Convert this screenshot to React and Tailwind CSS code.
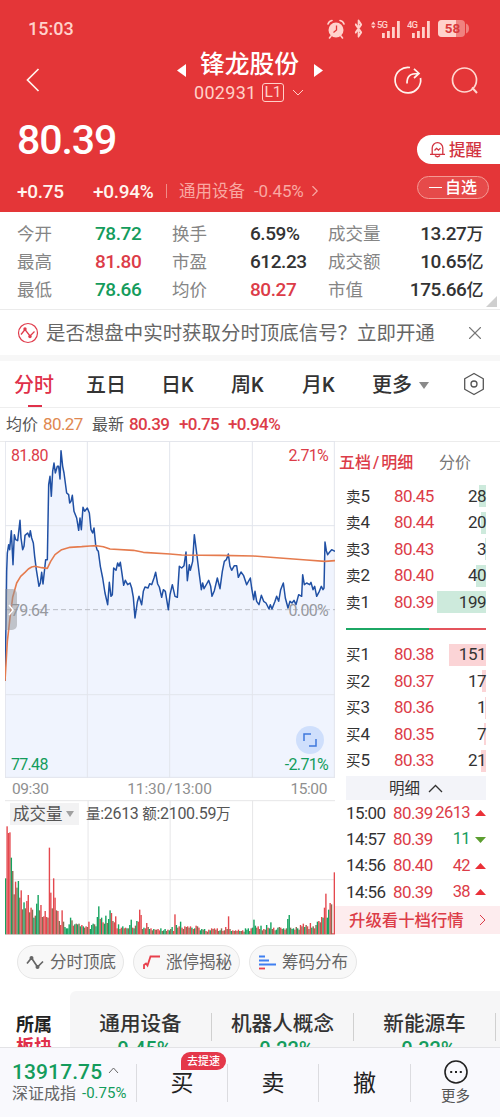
import React from 'react';
import { ChevronRight, X, Bluetooth } from 'lucide-react';

// 分时价格走势
const pricePoints =
  '15,729 18,555 20,400 22,345 26,320 29,335 34,278 39,380 43,290 47,305 53,308 60,247 63,300 68,335 72,325 75,292 83,285 88,297 91,278 95,300 100,315 104,355 109,395 117,445 121,435 125,403 129,438 137,365 142,365 146,140 150,115 154,175 158,100 162,75 166,105 172,85 176,85 180,123 183,38 188,85 192,105 200,165 206,170 209,195 213,190 217,172 222,220 230,240 236,277 240,240 244,275 249,208 254,220 262,210 268,225 273,275 278,285 282,270 287,320 291,335 295,340 301,385 308,420 315,465 323,500 328,433 333,475 337,470 341,390 348,397 353,375 357,385 361,373 365,400 371,442 376,427 383,440 390,435 395,450 400,478 405,540 412,492 417,475 425,500 430,460 435,447 444,450 449,437 455,440 462,420 467,403 473,438 478,447 485,478 490,455 496,460 505,515 510,470 517,440 525,475 532,478 538,385 545,390 552,383 558,342 562,428 568,380 571,397 578,370 583,290 590,345 598,410 604,455 608,435 612,452 620,438 626,427 632,445 636,475 643,458 652,420 660,452 667,400 673,370 679,365 685,348 690,385 695,397 703,383 710,383 715,418 723,402 731,413 740,440 751,420 755,450 761,485 765,460 770,490 777,500 784,472 791,490 798,495 807,513 811,500 816,513 825,490 830,475 836,490 842,455 850,435 856,480 864,510 870,490 876,495 882,487 888,500 896,470 905,475 908,410 913,440 920,435 929,440 933,433 939,455 944,445 950,475 958,460 964,445 969,455 972,450 975,312 979,338 983,350 989,342 995,335 1005,340';

// 均价线
const avgPoints =
  '15,729 22,610 30,540 38,478 50,435 62,415 75,403 85,393 95,387 105,385 125,389 142,391 152,370 165,350 185,335 210,328 245,326 270,324 290,323 310,326 330,333 400,337 430,343 510,348 545,351 660,352 760,354 840,360 920,366 975,370 1005,368';

// 成交量：高度 + 颜色（r 红 / g 绿 / m 混合）
const volumes =
  '168g 324r 304r 306r 230g 190m 120m 158r 140m 160g 110m 132r 75m 96g 78m 100r 118r 66m 80r 74m 50g 56m 92g 118g 72m 88r 52m 54r 70r 52r 50m 260r 125r 78m 168r 110r 72m 70r 40m 28r 72r 38m 22g 18g 18g 30g 50g 42m 26r 30g 32m 30g 32m 24g 28r 24g 20m 24r 22m 38r 16g 28g 32g 30m 24g 52g 84g 46r 50g 36r 32g 56g 34m 46g 72g 64r 40m 36r 54r 18r 30g 16m 20r 24g 18m 20r 18g 18m 28g 44g 20r 18g 26m 40g 38r 74r 58r 16m 20g 18r 34r 22m 16g 18r 12m 16g 14r 14m 16r 12r 18g 10m 12g 16g 10m 14r 12g 16m 22g 10r 60r 28g 20m 24r 38g 20r 16m 24r 22m 24r 20m 24r 20g 16r 18g 26r 24m 20r 12g 16g 14m 16g 10r 8m 14r 12g 18r 16m 18r 14m 18r 10m 12g 18m 10r 12m 22r 16m 54r 16m 10g 12r 10m 12r 10m 14r 10g 10m 12r 8m 18g 14g 18g 10m 18r 20g 44g 26g 20m 24r 16m 26g 12m 16r 14m 28g 20r 18g 36g 16m 20r 12m 14g 20g 22m 20r 16m 18g 14r 18m 46g 58g 20m 16g 18g 14r 22m 18g 14m 28r 24m 32r 22g 28m 24r 16m 34r 20g 24m 18r 28m 38g 40r 36m 52r 50g 80r 122r 50g 74g 94r 90m 4r 186r';
const volumeColor = { r: '#e4484e', g: '#14a35f', m: '#8c6a50' };
const bars = volumes.split(' ').map(v => ({ h: parseInt(v, 10), c: volumeColor[v.slice(-1)] }));

const stats = [
  ['今开', '78.72', 'text-[#149c5c]', '换手', '6.59%', 'text-[#333]', '成交量', '13.27万'],
  ['最高', '81.80', 'text-[#dc3c48]', '市盈', '612.23', 'text-[#333]', '成交额', '10.65亿'],
  ['最低', '78.66', 'text-[#149c5c]', '均价', '80.27', 'text-[#dc3c48]', '市值', '175.66亿'],
];

const asks = [
  ['卖5', '80.45', '28', 7],
  ['卖4', '80.44', '20', 5],
  ['卖3', '80.43', '3', 1],
  ['卖2', '80.40', '40', 10],
  ['卖1', '80.39', '199', 49],
];

const bids = [
  ['买1', '80.38', '151', 37],
  ['买2', '80.37', '17', 4],
  ['买3', '80.36', '1', 1],
  ['买4', '80.35', '7', 2],
  ['买5', '80.33', '21', 5],
];

const trades = [
  ['15:00', '80.39', '2613', true],
  ['14:57', '80.39', '11', false],
  ['14:56', '80.40', '42', true],
  ['14:56', '80.39', '38', true],
];

const StatusBar = () => (
  <div className="flex h-[54px] items-center pl-7 pr-[31px] pt-[3px] text-[#ffd2cc]">
    <span className="flex-1 text-[18px] font-medium">15:03</span>
    <svg width="18" height="20" viewBox="0 0 18 20" className="mr-[7px]">
      <circle cx="9" cy="11" r="7.500" fill="currentColor" />
      <path d="M1 5 Q2 2 5 1.500 M17 5 Q16 2 13 1.500 M4 17 L2.500 19 M14 17 L15.500 19" stroke="currentColor" strokeWidth="1.600" fill="none" strokeLinecap="round" />
      <path d="M9.500 6.500 V11 L6.500 13.500" stroke="#e43638" strokeWidth="1.300" fill="none" />
    </svg>
    <Bluetooth className="mr-[6px] h-[19px] w-[13px]" strokeWidth={3} preserveAspectRatio="none" />
    <svg width="29" height="20" viewBox="0 0 29 20" className="mr-[7px]" fill="currentColor">
      <path d="M0 5.500 L2.300 2.500 L4.600 5.500 Z M0 6.800 L2.300 9.500 L4.600 6.800 Z" />
      <text x="6" y="9" fontSize="9.500" fontWeight="500" textLength="11">5G</text>
      <path d="M11 14h2.800v5H11z M16 12h2.800v7H16z M21 8h2.800v11H21z M26 2h2.800v17H26z" />
    </svg>
    <svg width="23" height="20" viewBox="0 0 23 20" className="mr-[8px]" fill="currentColor">
      <text x="0" y="9" fontSize="9.500" fontWeight="500" textLength="11">4G</text>
      <path d="M5 14h2.800v5H5z M10 12h2.800v7H10z M15 8h2.800v11H15z M20 2h2.800v17H20z" />
    </svg>
    <svg width="31" height="17" viewBox="0 0 31 17">
      <rect x="0" y="0" width="27" height="17" rx="4" fill="#f0827f" />
      <path d="M4 0h14v17H4a4 4 0 0 1-4-4V4a4 4 0 0 1 4-4z" fill="#ffd2cc" />
      <path d="M28 3.500q3 1 3 5t-3 5z" fill="#f0827f" />
      <text x="14.500" y="13.300" fontSize="13.500" fontWeight="700" textAnchor="middle" fill="#d93a3c">58</text>
    </svg>
  </div>
);

const Header = () => (
  <header className="h-[212px] bg-[#e43638] text-[#fff4ee]">
    <StatusBar />
    <div className="flex h-[54px] items-center">
      <svg width="14" height="24" viewBox="0 0 14 24" className="-mt-[2px] ml-[26px]">
        <path d="M12.500 1 L1.500 12 L12.500 23" stroke="currentColor" strokeWidth="1.700" fill="none" />
      </svg>
      <div className="-mt-[5px] ml-[137px] flex w-[146px] flex-col">
        <div className="flex h-[28px] items-center justify-between">
          <svg width="9" height="13" viewBox="0 0 9 13" className="mt-[10px]"><path d="M9 0v13L0 6.500z" fill="#fff" /></svg>
          <span className="pr-px text-[24.800px] font-medium leading-none text-white">锋龙股份</span>
          <svg width="9" height="13" viewBox="0 0 9 13" className="mt-[10px]"><path d="M0 0v13L9 6.500z" fill="#fff" /></svg>
        </div>
        <div className="flex h-[26px] items-center pl-[17px] text-[#ffd0c8]">
          <span className="w-[68px] text-[18px] leading-none tracking-[0.300px]">002931</span>
          <span className="flex h-[19px] w-[22px] items-center justify-center rounded-[3px] border border-[#ffd0c8] pt-px text-[15.500px] leading-none">L1</span>
          <svg width="12" height="7" viewBox="0 0 12 7" className="ml-[8px]"><path d="M1 1l5 5 5-5" stroke="currentColor" fill="none" /></svg>
        </div>
      </div>
      <svg width="30" height="30" viewBox="0 0 30 30" className="-mt-[2px] ml-[70px]" fill="none" stroke="currentColor" strokeWidth="1.700">
        <path d="M17 2.500 A12.800 12.800 0 1 0 27.500 13" />
        <path d="M14 18.500 C14 11 17 8.500 25.500 8.500 M21 3.800 L26 8.500 L21 13" />
      </svg>
      <svg width="28" height="30" viewBox="0 0 28 30" className="-mt-[2px] ml-[28px]" fill="none" stroke="#ffd8d0" strokeWidth="1.700">
        <circle cx="13.500" cy="15" r="12" />
        <path d="M21 22.500 L26 28" strokeWidth="2" />
      </svg>
    </div>
    <div className="flex h-[104px] justify-between">
      <div className="flex flex-col pl-[17px]">
        <span className="mt-[10px] flex h-[44px] items-center text-[41px] font-medium leading-none tracking-[-1.100px] text-white">80.39</span>
        <div className="mt-[17px] flex h-[24px] items-center text-[19px] leading-none">
          <span className="w-[76px] font-medium tracking-[-0.300px]">+0.75</span>
          <span className="w-[73px] font-medium tracking-[-0.300px]">+0.94%</span>
          <span className="h-[14px] w-px bg-[#f08c88]" />
          <span className="ml-[12px] w-[75px] pt-[2px] text-[16.500px] text-[#f9a8a2]">通用设备</span>
          <span className="w-[56px] text-[17px] tracking-[-0.100px] text-[#f9a8a2]">-0.45%</span>
          <ChevronRight className="-ml-1 h-[18px] w-[18px] text-[#f9a8a2]" strokeWidth={1.5} />
        </div>
      </div>
      <div className="flex w-[83px] flex-col pt-[27px]">
        <div className="flex h-[29px] items-center rounded-l-full bg-white pl-[13px] text-[16.500px] font-medium leading-none text-[#d23440]">
          <svg width="15" height="17" viewBox="0 0 15 17" className="mr-[4px]" fill="none" stroke="currentColor" strokeWidth="1.300">
            <path d="M2.200 13V7a5.300 5.300 0 0 1 10.600 0v6 M0 13.300h15 M5 14.500q2.500 2.500 5 0 M4.500 9.500l2-2.200 2 1.800 2-2" />
          </svg>
          <span className="pt-[3px]">提醒</span>
        </div>
        <div className="mt-[12px] flex h-[23px] w-[72px] items-center justify-center rounded-full border border-[#f49a94] bg-[#e64a4a] text-[16px] font-medium leading-none text-white">
          <span className="mr-[3px] h-[1.500px] w-[13px] bg-white" />
          <span className="pt-px">自选</span>
        </div>
      </div>
    </div>
  </header>
);

const Stats = () => (
  <section className="relative flex h-[98px] flex-col border-b border-[#ebebeb] pt-[7px] text-[#333]">
    {stats.map(row => (
      <div key={row[0]} className="flex h-7 items-center pl-[17px] pr-[17px] text-[19px] font-medium leading-none tracking-[-0.450px]">
        <span className="w-[78px] pt-[3px] text-[17.500px] font-normal tracking-normal text-[#858585]">{row[0]}</span>
        <span className={`w-[77px] ${row[2]}`}>{row[1]}</span>
        <span className="w-[78px] pt-[3px] text-[17.500px] font-normal tracking-normal text-[#858585]">{row[3]}</span>
        <span className={`w-[78px] ${row[5]}`}>{row[4]}</span>
        <span className="pt-[3px] text-[17.500px] font-normal tracking-normal text-[#858585]">{row[6]}</span>
        <span className="flex-1 text-right">{row[7].slice(0, -1)}<span className="text-[17px]">{row[7].slice(-1)}</span></span>
      </div>
    ))}
    <svg width="11" height="11" viewBox="0 0 11 11" className="absolute bottom-[2px] right-[3px]"><path d="M11 0v11H0z" fill="#cfcfcf" /></svg>
  </section>
);

const Banner = () => (
  <section className="flex h-[51px] items-center border-b-[6px] border-[#f7f7f7] pl-[17px] text-[#666]">
    <svg width="22" height="22" viewBox="0 0 22 22" fill="none" stroke="#e03c4c">
      <circle cx="11" cy="11" r="9.500" strokeWidth="1.200" />
      <path d="M4 12.500 L8 7.500 L13 14 L17.500 9.500" strokeWidth="1.300" />
      <circle cx="8" cy="7" r="1.700" fill="#e03c4c" stroke="none" />
      <circle cx="13" cy="14.500" r="1.700" fill="#e03c4c" stroke="none" />
    </svg>
    <span className="ml-[7px] flex-1 whitespace-nowrap pt-[3px] text-[19.450px] leading-none">是否想盘中实时获取分时顶底信号？立即开通</span>
    <X className="mr-[14px] h-[22px] w-[22px] text-[#777]" strokeWidth={1.2} />
  </section>
);

const Tabs = () => (
  <nav className="flex h-[47px] items-center border-b border-[#eee] pl-[14px] text-[20px] font-medium leading-none text-[#333]">
    <div className="relative flex h-full w-[72px] items-center pt-[2px] text-[#e0304a]">
      分时
      <span className="absolute bottom-0 left-[14px] h-[2px] w-[14px] bg-[#e0304a]" />
    </div>
    <span className="w-[75px] pt-[2px]">五日</span>
    <span className="w-[70px] pt-[2px]">日K</span>
    <span className="w-[71px] pt-[2px]">周K</span>
    <span className="w-[70px] pt-[2px]">月K</span>
    <span className="pt-[2px]">更多</span>
    <svg width="10" height="7" viewBox="0 0 10 7" className="ml-[7px] mt-[2px]"><path d="M0 0h10L5 7z" fill="#8a8a8a" /></svg>
    <svg width="22" height="24" viewBox="0 0 22 24" className="ml-[34px]" fill="none" stroke="#555" strokeWidth="1.300">
      <path d="M11 1.500 L20.300 6.700 V17.300 L11 22.500 L1.700 17.300 V6.700 Z" strokeLinejoin="round" />
      <circle cx="11" cy="12" r="3" />
    </svg>
  </nav>
);

const Quote = () => (
  <div className="flex h-[33px] items-center pl-[6px] text-[17px] leading-none tracking-[-0.600px] text-[#dc3c48]">
    <span className="w-[37px] pt-px text-[16px] tracking-normal text-[#555]">均价</span>
    <span className="w-[49px] text-[#e08850]">80.27</span>
    <span className="w-[37px] pt-px text-[16px] tracking-normal text-[#555]">最新</span>
    <span className="w-[50px] font-medium">80.39</span>
    <span className="w-[49px] font-medium">+0.75</span>
    <span className="font-medium">+0.94%</span>
  </div>
);

const PriceChart = () => (
  <div className="relative h-[337px] w-[330px] text-[16px] leading-none tracking-[-0.700px]">
    <svg width="330" height="337" viewBox="15 9 990 1011" fill="none">
      <polygon points={`15,1020 ${pricePoints} 1005,1020`} fill="#f0f4fe" />
      <path d="M262 9V1020 M509 9V1020 M757 9V1020 M15 263H1005 M15 770H1005" stroke="#e2e5ec" strokeWidth="3" />
      <path d="M16 9V1020 M1003 9V1020 M15 10H1005 M15 1018H1005" stroke="#e2e5ec" strokeWidth="3" />
      <path d="M15 515H1005" stroke="#b9bcc4" strokeWidth="3" strokeDasharray="15 9" />
      <polyline points={pricePoints} stroke="#2050a4" strokeWidth="4.500" strokeLinejoin="round" />
      <polyline points={avgPoints} stroke="#e57b4e" strokeWidth="4.800" strokeLinejoin="round" />
    </svg>
    <span className="absolute left-[6px] top-[7px] text-[#dc3c48]">81.80</span>
    <span className="absolute right-[7px] top-[7px] text-[#dc3c48]">2.71%</span>
    <span className="absolute left-[6px] top-[162px] text-[#97999e]">79.64</span>
    <span className="absolute right-[7px] top-[162px] text-[#97999e]">0.00%</span>
    <span className="absolute bottom-[5px] left-[6px] text-[#149c5c]">77.48</span>
    <span className="absolute bottom-[5px] right-[7px] text-[#149c5c]">-2.71%</span>
    <div className="absolute left-0 top-[148px] flex h-[41px] w-[12px] items-center justify-center rounded-r-[5px] bg-[#8f9196]/50">
      <svg width="6" height="12" viewBox="0 0 6 12"><path d="M1 1l4 5-4 5" stroke="#fff" strokeWidth="1.500" fill="none" /></svg>
    </div>
    <div className="absolute bottom-[24px] right-[11px] flex h-[28px] w-[28px] items-center justify-center rounded-full bg-[#cfdffc]">
      <svg width="14" height="14" viewBox="0 0 14 14" fill="none" stroke="#3f78dc" strokeWidth="1.500"><path d="M1 8V1h7 M13 6v7H6" /></svg>
    </div>
  </div>
);

const VolumeChart = () => (
  <div className="relative h-[135px] w-[330px]">
    <svg width="330" height="135" viewBox="12 239 993 405" preserveAspectRatio="none">
      <path d="M12 241H1005 M262 241V643 M509 241V643 M757 241V643 M12 478H1005 M12 642H1005" stroke="#e6e6e8" strokeWidth="3" />
      {bars.map((b, i) => (
        <rect key={i} x={12 + (i * 989) / (bars.length - 1)} y={642 - b.h} width="4.200" height={b.h} fill={b.c} />
      ))}
    </svg>
    <div className="absolute left-[5px] top-[3px] flex h-[22px] items-center text-[16px] leading-none text-[#555]">
      <div className="flex h-full w-[69px] items-center bg-[#f2f2f3] pl-[3px] text-[16.500px]">
        <span className="pt-[2px]">成交量</span>
        <svg width="8" height="6" viewBox="0 0 8 6" className="ml-[3px]"><path d="M0 0h8L4 6z" fill="#a0a0a0" /></svg>
      </div>
      <span className="ml-[7px] whitespace-nowrap pt-px tracking-[-0.300px]"><span className="text-[14.500px]">量</span>:2613 <span className="text-[14.500px]">额</span>:2100.59<span className="text-[14.500px]">万</span></span>
    </div>
  </div>
);

const Level = ({ row, bar }) => (
  <div className="flex h-[26.500px] items-center text-[17px] leading-none">
    <span className="w-[48px] text-[#333]"><span className="text-[14.500px]">{row[0][0]}</span>{row[0][1]}</span>
    <span className="w-[43px] tracking-[-0.600px] text-[#dc3c48]">{row[1]}</span>
    <div className="relative flex h-[22px] flex-1 items-center justify-end text-[#333]">
      <span className={`absolute right-0 top-0 h-full ${bar}`} style={{ width: row[3] }} />
      <span className="relative tracking-[-0.500px]">{row[2]}</span>
    </div>
  </div>
);

const OrderBook = () => (
  <div className="flex w-[165px] flex-col">
    <div className="flex h-[41px] items-center pl-[4px] leading-none">
      <span className="w-[100px] text-[16px] font-medium text-[#dc3c48]">五档<span className="mx-[2px]">/</span>明细</span>
      <span className="text-[16px] text-[#777]">分价</span>
    </div>
    <div className="flex flex-col pl-[11px] pr-[14px]">
      {asks.map(row => <Level key={row[0]} row={row} bar="bg-[#cdeadc]" />)}
      <div className="my-[12px] flex h-[2px]">
        <span className="w-[83px] bg-[#1ca764]" />
        <span className="flex-1 bg-[#e4545c]" />
      </div>
      {bids.map(row => <Level key={row[0]} row={row} bar="bg-[#fbd4d6]" />)}
      <div className="mt-[2px] flex h-[24px] items-center justify-center bg-[#f3f4f9] text-[15.500px] leading-none text-[#333]">
        <span className="pt-[3px]">明细</span>
        <svg width="15" height="9" viewBox="0 0 15 9" className="ml-[8px]"><path d="M1 8l6.500-6.500L14 8" stroke="#333" strokeWidth="1.300" fill="none" /></svg>
      </div>
      {trades.map((t, i) => (
        <div key={i} className="flex h-[26.400px] items-center text-[17px] leading-none tracking-[-0.600px]">
          <span className="w-[47px] text-[#333]">{t[0]}</span>
          <span className="w-[40px] text-[#dc3c48]">{t[1]}</span>
          <span className={`flex-1 text-right text-[16.500px] ${t[3] ? 'text-[#dc3c48]' : 'text-[#149c5c]'}`}>{t[2]}</span>
          <svg width="11" height="6" viewBox="0 0 11 6" className="ml-[5px]">
            {t[3] ? <path d="M0 6h11L5.500 0z" fill="#ea3038" /> : <path d="M0 0h11L5.500 6z" fill="#5c9e30" />}
          </svg>
        </div>
      ))}
    </div>
    <div className="flex h-[28px] items-center justify-between bg-[#fdecee] pl-[14px] pr-[14px] text-[16.400px] font-medium leading-none text-[#dc3c48]">
      <span className="pt-[3px]">升级看十档行情</span>
      <svg width="7" height="12" viewBox="0 0 7 12"><path d="M1 1l5 5-5 5" stroke="currentColor" fill="none" /></svg>
    </div>
  </div>
);

const Tools = () => (
  <div className="flex h-[56px] items-center gap-[9px] pb-[2px] pl-[17px] text-[16.500px] leading-none text-[#666]">
    <div className="flex h-[34px] w-[107px] items-center whitespace-nowrap rounded-full border border-[#e6e6e6] bg-[#f8f8f8] pl-[8px]">
      <svg width="18" height="15" viewBox="0 0 18 15" className="mr-[6px]" fill="none" stroke="#666" strokeWidth="1.700">
        <path d="M1 8.500 L5.500 3 L11.500 12 L17 6.500" />
        <circle cx="5.500" cy="3" r="2" fill="#666" stroke="none" />
        <circle cx="11.500" cy="12" r="2" fill="#666" stroke="none" />
      </svg>
      <span className="pt-[3px]">分时顶底</span>
    </div>
    <div className="flex h-[34px] w-[107px] items-center whitespace-nowrap rounded-full border border-[#e6e6e6] bg-[#f8f8f8] pl-[9px]">
      <svg width="18" height="15" viewBox="0 0 18 15" className="mr-[5px]" fill="none" stroke="#e8404c" strokeWidth="1.800">
        <path d="M1 14 V10 L3 8.500 L4.500 10.500 L7.500 1.500 H17" />
      </svg>
      <span className="pt-[3px]">涨停揭秘</span>
    </div>
    <div className="flex h-[34px] w-[108px] items-center whitespace-nowrap rounded-full border border-[#e6e6e6] bg-[#f8f8f8] pl-[9px]">
      <svg width="17" height="15" viewBox="0 0 17 15" className="mr-[6px]" strokeWidth="1.800">
        <path d="M0 1.500h6 M0 5.500h10 M0 9.500h17" stroke="#3f7ff0" />
        <path d="M0 13.500h6" stroke="#e8404c" />
      </svg>
      <span className="pt-[3px]">筹码分布</span>
    </div>
  </div>
);

const sectors = [
  ['通用设备', '-0.45%'],
  ['机器人概念', '-0.22%'],
  ['新能源车', '-0.32%'],
];

const Sectors = () => (
  <div className="flex h-[56px] overflow-hidden">
    <div className="w-[70px] pl-[16px] pt-[23px] text-[18px] font-bold leading-[22px] text-[#222]">
      所属
      <div className="text-[#e0304a]">板块</div>
    </div>
    <div className="flex flex-1 overflow-hidden rounded-tl-[6px] bg-[#f6f6f7]">
      {sectors.map(s => (
        <div key={s[0]} className="flex w-[142px] shrink-0 flex-col items-center pt-[20px] leading-none">
          <div className="flex h-[24px] w-full items-center">
            <span className="flex-1 whitespace-nowrap pt-[2px] text-center text-[20.600px] font-medium text-[#333]">{s[0]}</span>
            <span className="mt-[7px] h-[28px] w-px bg-[#d0d0d0]" />
          </div>
          <span className="mt-[4px] text-[20px] font-medium text-[#149c5c]">{s[1]}</span>
        </div>
      ))}
    </div>
  </div>
);

const BottomBar = () => (
  <footer className="flex h-[70px] items-center border-t border-[#e3e3e6] bg-[#f9f9fd] leading-none text-[#222]">
    <div className="flex w-[136px] flex-col pb-[2px] pl-[12px]">
      <div className="flex h-[24px] items-center text-[21px] font-medium tracking-[0.100px] text-[#149c5c]">
        13917.75
        <svg width="11" height="7" viewBox="0 0 11 7" className="ml-[6px] mt-[-3px]"><path d="M1 6l4.500-5L10 6" stroke="#666" fill="none" /></svg>
      </div>
      <div className="flex h-[19px] items-center whitespace-nowrap text-[16px] text-[#666]">
        <span className="pt-px">深证成指</span>
        <span className="ml-[6px] text-[15px] text-[#149c5c]">-0.75%</span>
      </div>
    </div>
    <span className="h-[38px] w-px bg-[#dcdce0]" />
    <div className="relative flex h-full w-[90px] items-center justify-center text-[23px]">
      <span className="mt-[2px]">买</span>
      <span className="absolute left-[44px] top-[4px] flex h-[18px] w-[45px] items-center justify-center rounded-full rounded-bl-none bg-[#e4384a] pt-px text-[11px] font-medium text-white">去提速</span>
    </div>
    <span className="h-[38px] w-px bg-[#dcdce0]" />
    <span className="mt-[2px] w-[90px] text-center text-[23px]">卖</span>
    <span className="h-[38px] w-px bg-[#dcdce0]" />
    <span className="mt-[2px] w-[91px] text-center text-[23px]">撤</span>
    <span className="h-[38px] w-px bg-[#dcdce0]" />
    <div className="flex flex-1 flex-col items-center text-[14.500px] text-[#555]">
      <svg width="24" height="24" viewBox="0 0 24 24" className="mb-[6px]">
        <circle cx="12" cy="12" r="11" stroke="#222" strokeWidth="1.600" fill="none" />
        <path d="M6.200 11h2v2h-2z M11 11h2v2h-2z M15.800 11h2v2h-2z" fill="#222" />
      </svg>
      更多
    </div>
  </footer>
);

const App = () => {
  return (
    <div className="flex h-[1117px] w-[500px] flex-col overflow-hidden bg-white font-['Roboto','Noto_Sans_CJK_SC',sans-serif]">
      <Header />
      <Stats />
      <Banner />
      <Tabs />
      <Quote />
      <main className="flex h-[494px] border-t border-[#ececec]">
        <div className="-mt-px flex w-[335px] flex-col pl-[5px]">
          <PriceChart />
          <div className="flex h-[22px] w-[330px] items-center justify-between pl-[7px] pr-[8px] pt-px text-[15.500px] leading-none tracking-[-0.400px] text-[#8f8f8f]">
            <span>09:30</span>
            <span className="tracking-[-0.100px]">11:30<span className="mx-[1px]">/</span>13:00</span>
            <span>15:00</span>
          </div>
          <VolumeChart />
        </div>
        <OrderBook />
      </main>
      <Tools />
      <Sectors />
      <BottomBar />
    </div>
  );
};

export default App;
